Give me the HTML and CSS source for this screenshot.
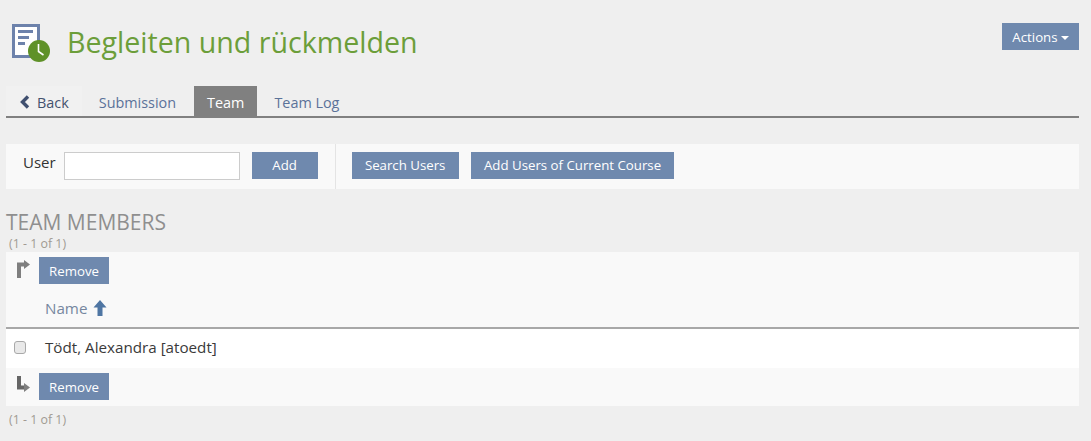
FILE: index.html
```html
<!DOCTYPE html>
<html lang="en">
<head>
    <meta charset="UTF-8">
    <title>Begleiten und rückmelden</title>
    <link rel="stylesheet" href="styles.css">
</head>
<body>
    <div class="page-head">
        <svg class="head-icon" width="38" height="38" viewBox="0 0 38 38">
            <rect x="1.500" y="1.500" width="25" height="31" fill="#fff" stroke="#6d82ab" stroke-width="3"/>
            <rect x="6" y="6" width="15" height="3" fill="#6d82ab"/>
            <rect x="6" y="12" width="11" height="3" fill="#6d82ab"/>
            <rect x="6" y="18" width="7" height="3" fill="#6d82ab"/>
            <circle cx="27" cy="27" r="11" fill="#5f9128"/>
            <path d="M26.500 20v7.500l5 3.500" fill="none" stroke="#fff" stroke-width="1.600"/>
        </svg>
        <h1>Begleiten und rückmelden</h1>
        <button class="btn actions">Actions <span class="caret"></span></button>
    </div>

    <div class="tabs">
        <a class="tab back">
            <svg width="10" height="14" viewBox="0 0 10 14"><path d="M8 1.500 2.500 7 8 12.500" fill="none" stroke="#3f4f6f" stroke-width="3.400"/></svg>
            Back
        </a>
        <a class="tab">Submission</a>
        <a class="tab active">Team</a>
        <a class="tab">Team Log</a>
    </div>

    <div class="toolbar">
        <div class="tool-group">
            <label class="user-label">User</label>
            <input class="user-input" type="text">
            <button class="btn add-btn">Add</button>
        </div>
        <div class="tool-group second">
            <button class="btn">Search Users</button>
            <button class="btn">Add Users of Current Course</button>
        </div>
    </div>

    <h2>TEAM MEMBERS</h2>
    <div class="count">(1 - 1 of 1)</div>

    <div class="row actions-row">
        <svg class="arrow" width="14" height="18" viewBox="0 0 14 18"><path d="M2 18V4.500h6" fill="none" stroke="#7f7f7f" stroke-width="4"/><path d="M7 0l6 4.500L7 9z" fill="#7f7f7f"/></svg>
        <button class="btn remove">Remove</button>
    </div>
    <div class="row name-head">
        <span>Name</span>
        <svg width="14" height="16" viewBox="0 0 14 16"><path d="M7 0l6.500 7.500H9.500V16h-5V7.500H.5z" fill="#4f76a3"/></svg>
    </div>
    <div class="row member">
        <input class="check" type="checkbox">
        <span>Tödt, Alexandra [atoedt]</span>
    </div>
    <div class="row actions-row">
        <svg class="arrow" width="14" height="18" viewBox="0 0 14 18"><path d="M2 0v11.500h6" fill="none" stroke="#666" stroke-width="4"/><path d="M7 7l6 4.500L7 16z" fill="#7f7f7f"/></svg>
        <button class="btn remove">Remove</button>
    </div>
    <div class="count bottom">(1 - 1 of 1)</div>
</body>
</html>
```

FILE: styles.css
```css
body {
    font-family: "Open Sans", sans-serif;
    font-size: 14.4px;
    background-color: #efefef;
    color: #333;
    margin: 0;
    padding: 0 12px 0 6px;
}
.btn {
    font-family: inherit;
    font-size: 13.25px;
    height: 27px;
    padding: 0 13.25px 2px;
    background-color: #6f89ae;
    color: white;
    border: none;
}
.page-head {
    display: flex;
    align-items: flex-start;
    height: 86px;
}
.head-icon {
    margin: 24px 0 0 6px;
}
h1 {
    font-size: 28.6px;
    font-weight: 400;
    line-height: 38px;
    color: #6c9e3a;
    margin: 23px 0 0 17px;
    flex: 1;
}
.actions {
    margin-top: 23px;
    padding: 0 10px;
}
.caret {
    display: inline-block;
    border-left: 4px solid transparent;
    border-right: 4px solid transparent;
    border-top: 4px solid white;
    vertical-align: 2px;
}
.tabs {
    display: flex;
    height: 30px;
    border-bottom: 2px solid #808080;
}
.tab {
    display: flex;
    align-items: center;
    gap: 7px;
    padding: 2px 17px 0;
    color: #5b7299;
}
.tab.back {
    background-color: #f1f1f1;
    color: #44526e;
    padding: 2px 13px 0 14px;
}
.tab.active {
    background-color: #808080;
    color: white;
    margin-left: 1px;
    padding: 2px 13px 0;
}
.toolbar {
    display: flex;
    align-items: stretch;
    height: 45px;
    margin-top: 26px;
    background-color: #f9f9f9;
}
.tool-group {
    display: flex;
    align-items: flex-start;
    padding-top: 8px;
}
.user-label {
    font-size: 15px;
    line-height: 18px;
    margin: 1px 8px 0 17px;
}
.user-input {
    width: 176px;
    height: 28px;
    box-sizing: border-box;
    border: 1px solid #ccc;
    background: white;
    margin-right: 12px;
}
.add-btn {
    width: 66px;
    padding: 0 0 2px;
}
.tool-group.second {
    margin-left: 17px;
    padding-left: 16px;
    gap: 12px;
    border-left: 1px solid #e4e4e4;
}
h2 {
    font-size: 21px;
    font-weight: 400;
    line-height: 27px;
    color: #8f8f8f;
    margin: 20px 0 0;
}
.count {
    font-size: 12.4px;
    line-height: 16px;
    color: #a09a92;
    margin-left: 3px;
}
.row {
    display: flex;
    align-items: center;
    box-sizing: border-box;
    height: 38px;
}
.actions-row {
    background-color: #f9f9f9;
    align-items: flex-start;
    padding-top: 5px;
}
.arrow {
    margin: 3px 8px 0 11px;
}
.remove {
    padding: 0 10px;
    width: 70px;
}
.name-head {
    background-color: #f9f9f9;
    border-bottom: 2px solid #a8a8a8;
    height: 39px;
    padding: 0 0 2px 39px;
    gap: 6px;
    font-size: 15.2px;
    color: #76879f;
}
.member {
    background-color: white;
    height: 39px;
    padding-bottom: 3px;
    font-size: 15.2px;
    color: #3a3a3a;
}
.check {
    appearance: none;
    width: 12px;
    height: 13px;
    margin: 0 19px 0 8px;
    box-sizing: border-box;
    border: 1px solid #a9a9a9;
    border-radius: 3px;
    background-color: #e9e9e9;
}
.count.bottom {
    margin-top: 6px;
}
```
